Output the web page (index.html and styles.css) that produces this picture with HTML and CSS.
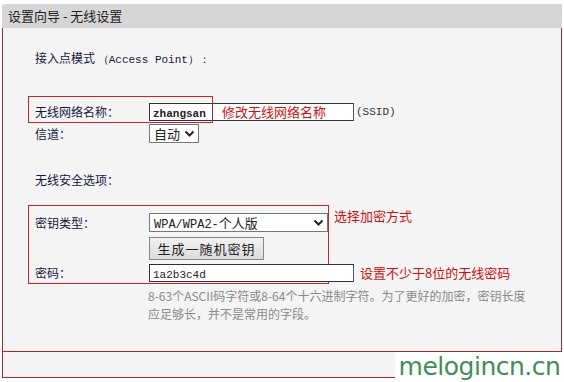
FILE: index.html
```html
<!DOCTYPE html>
<html>
<head>
<meta charset="utf-8">
<link rel="stylesheet" href="styles.css">
</head>
<body>
<div class="page">
  <div class="header">设置向导 - 无线设置</div>
  <div class="panel">
    <div class="section-title">接入点模式 <span class="mono">（Access Point）：</span></div>
    <div class="row row-ssid">
      <span class="label">无线网络名称：</span>
      <span class="input wide"><span class="mono bold">zhangsan</span></span>
      <span class="mono suffix">(SSID)</span>
      <span class="note note-ssid">修改无线网络名称</span>
      <span class="redbox box1"></span>
    </div>
    <div class="row row-channel">
      <span class="label">信道：</span>
      <span class="select small"><span>自动</span><svg class="chev" viewBox="0 0 10 8" width="11" height="8"><path d="M1 1.5 L5 5.5 L9 1.5" fill="none" stroke="#222" stroke-width="2"/></svg></span>
    </div>
    <div class="row row-sec">
      <span class="label">无线安全选项：</span>
    </div>
    <div class="row row-type">
      <span class="label">密钥类型：</span>
      <span class="select large"><span><span class="mono">WPA/WPA2-</span>个人版</span><svg class="chev" viewBox="0 0 10 8" width="11" height="8"><path d="M1 1.5 L5 5.5 L9 1.5" fill="none" stroke="#222" stroke-width="2"/></svg></span>
      <span class="note note-type">选择加密方式</span>
      <span class="redbox box2"></span>
    </div>
    <div class="row row-btn">
      <span class="label"></span>
      <span class="button">生成一随机密钥</span>
    </div>
    <div class="row row-pass">
      <span class="label">密码：</span>
      <span class="input wide"><span class="mono">1a2b3c4d</span></span>
      <span class="note note-pass">设置不少于8位的无线密码</span>
    </div>
    <div class="help">8-63个ASCII码字符或8-64个十六进制字符。为了更好的加密，密钥长度<br>应足够长，并不是常用的字段。</div>
  </div>
  <div class="footer"></div>
  <div class="watermark">melogincn.cn</div>
</div>
</body>
</html>
```

FILE: styles.css
```css
html, body {
  margin: 0;
  padding: 0;
  background: #ffffff;
}
body {
  font-family: "Noto Sans CJK SC", "Noto Sans", sans-serif;
  font-size: 12px;
  color: #14183c;
}
.page {
  position: relative;
  width: 560px;
  height: 382px;
  margin-left: 2px;
  padding-top: 4px;
  box-sizing: border-box;
}
.header {
  height: 24px;
  line-height: 24px;
  background: #d6d6d6;
  border-top-left-radius: 3px;
  padding-left: 6px;
  font-size: 13px;
  color: #222;
}
.panel {
  position: relative;
  height: 324px;
  background: #f4f4f4;
  border-left: 1px solid #b0262e;
  border-right: 1px solid #b0262e;
  border-bottom: 1px solid #b0262e;
  padding-left: 32px;
  box-sizing: border-box;
  padding-top: 20px;
}
.footer {
  height: 26px;
  background: #f4f4f4;
  border-left: 1px solid #b0262e;
  border-right: 1px solid #b0262e;
  border-bottom: 1px solid #b0262e;
  box-sizing: border-box;
}
.mono {
  font-family: "Liberation Mono", "DejaVu Sans Mono", monospace;
  font-size: 11px;
}
.bold { font-weight: bold; }
.section-title {
  height: 20px;
  line-height: 20px;
}
.row {
  position: relative;
  display: flex;
  align-items: center;
}
.label {
  width: 114px;
  flex: none;
  line-height: 20px;
}
.row-ssid { margin-top: 34px; height: 20px; }
.row-channel { margin-top: 1px; height: 21px; }
.row-sec { margin-top: 26px; height: 20px; }
.row-type { margin-top: 22px; height: 21px; }
.row-btn { margin-top: 3px; height: 25px; }
.row-pass { margin-top: 2px; height: 20px; }
.input {
  height: 18px;
  box-sizing: border-box;
  background: #fff;
  border: 1px solid #333;
  border-right-color: #556;
  padding-left: 3px;
  line-height: 16px;
  color: #222;
}
.input.wide { width: 205px; }
.select {
  display: flex;
  align-items: center;
  justify-content: space-between;
  height: 19px;
  box-sizing: border-box;
  background: #fff;
  border: 1px solid #777;
  padding: 0 3px 0 4px;
  font-size: 13px;
  color: #222;
}
.select.small { width: 50px; }
.select.large { width: 179px; font-size: 13px; }
.select.large .mono { font-size: 12px; }
.chev { flex: none; }
.suffix {
  margin-left: 2px;
  color: #333;
}
.button {
  width: 115px;
  height: 23px;
  box-sizing: border-box;
  border: 1px solid #888;
  background: linear-gradient(#f2f2f2, #dcdcdc);
  text-align: center;
  line-height: 21px;
  font-size: 13px;
  letter-spacing: 1px;
  color: #222;
}
.note {
  position: absolute;
  color: #cc1111;
  font-size: 13px;
  white-space: nowrap;
  line-height: 18px;
}
.note-ssid { left: 187px; top: 1px; }
.note-type { left: 299px; top: -5px; }
.note-pass { left: 325px; top: 1px; }
.redbox {
  position: absolute;
  border: 1px solid #c0272d;
  box-sizing: border-box;
}
.box1 { left: -7px; top: -6px; width: 185px; height: 27px; }
.box2 { left: -7px; top: -7px; width: 301px; height: 79px; }
.help {
  margin-top: 4px;
  margin-left: 113px;
  line-height: 18px;
  color: #8a8a8a;
}
.watermark {
  position: absolute;
  right: -2px;
  bottom: 0;
  width: 169px;
  height: 30px;
  background: #ffffff;
  color: #3f8f55;
  font-family: "DejaVu Sans", sans-serif;
  font-size: 25px;
  line-height: 30px;
  text-align: center;
  letter-spacing: -0.5px;
}
```
